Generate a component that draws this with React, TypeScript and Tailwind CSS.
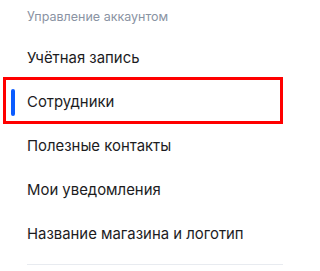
import React from 'react';

const items = [
  { label: 'Учётная запись' },
  { label: 'Сотрудники', active: true },
  { label: 'Полезные контакты' },
  { label: 'Мои уведомления' },
  { label: 'Название магазина и логотип' },
];

export default function App() {
  return (
    <div className="w-[305px] h-[271px] bg-white font-['Inter',sans-serif] overflow-hidden">
      <div className="pl-[27px] pt-[9px] pb-[11px] text-[12.5px] leading-4 text-[#8a93a3]">
        Управление аккаунтом
      </div>
      <ul className="ml-[3px] w-[280px]">
        {items.map((item) => (
          <li
            key={item.label}
            className="relative flex items-center h-11 pl-[24px] text-[14.9px] text-[#1c1c1e]"
          >
            {item.active && (
              <>
                <span className="absolute left-[8px] top-[9px] w-[4px] h-[27px] rounded-full bg-[#0b5cff]" />
                <span className="absolute inset-x-0 -top-[3px] bottom-0 border-[3px] border-[#ff0000]" />
              </>
            )}
            {item.label}
          </li>
        ))}
      </ul>
      <div className="mt-2 ml-[27px] mr-[22px] h-px bg-[#e8ebf0]" />
    </div>
  );
}
